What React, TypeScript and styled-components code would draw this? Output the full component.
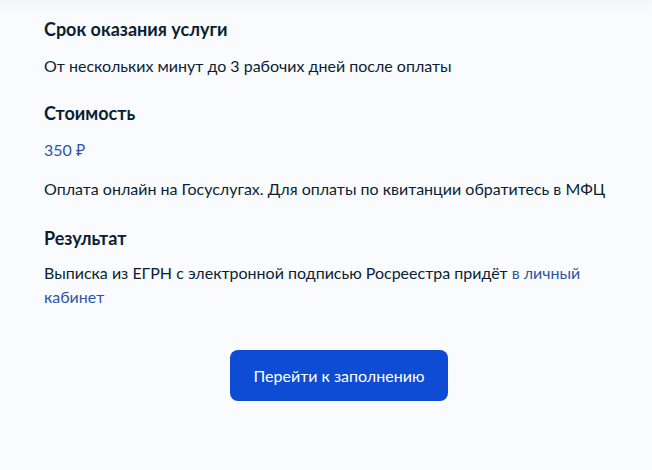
import React from 'react';
import styled, { createGlobalStyle } from 'styled-components';

const GlobalStyle = createGlobalStyle`
  html, body {
    margin: 0;
    padding: 0;
    background: #f9fbfe;
  }
  body {
    font-family: Lato, "Noto Sans", sans-serif;
    color: #0b1f33;
  }
`;

const Page = styled.div`
  width: 652px;
  height: 470px;
  box-sizing: border-box;
  padding: 17px 18px 0 44px;
  background: linear-gradient(#f4f6fa 0, #f9fbfe 14px);
`;

const Section = styled.section<{ gap?: number }>`
  margin-bottom: ${(p) => p.gap ?? 23}px;
`;

const Title = styled.h3<{ tight?: boolean }>`
  margin: 0 0 ${(p) => (p.tight ? 11 : 13)}px;
  font-size: 18px;
  line-height: 24px;
  font-weight: 700;
`;

const Text = styled.p<{ accent?: boolean; narrow?: boolean }>`
  margin: 0 0 15px;
  max-width: ${(p) => (p.narrow ? '540px' : 'none')};
  font-size: 16px;
  line-height: 24px;
  color: ${(p) => (p.accent ? '#2f55a4' : '#0b1f33')};
  &:last-child {
    margin-bottom: 0;
  }
`;

const Link = styled.a`
  color: #2f55a4;
  text-decoration: none;
`;

const Actions = styled.div`
  display: flex;
  justify-content: center;
  padding-top: 41px;
`;

const Button = styled.button`
  width: 218px;
  height: 51px;
  border: none;
  border-radius: 8px;
  background: #0d4cd3;
  color: #ffffff;
  font-family: Lato, "Noto Sans", sans-serif;
  font-size: 16px;
  cursor: pointer;
`;

export default function App() {
  return (
    <>
      <GlobalStyle />
      <Page>
        <Section>
          <Title>Срок оказания услуги</Title>
          <Text>От нескольких минут до 3 рабочих дней после оплаты</Text>
        </Section>
        <Section gap={25}>
          <Title>Стоимость</Title>
          <Text accent>350 ₽</Text>
          <Text>Оплата онлайн на Госуслугах. Для оплаты по квитанции обратитесь в МФЦ</Text>
        </Section>
        <Section gap={0}>
          <Title tight>Результат</Title>
          <Text narrow>
            Выписка из ЕГРН с электронной подписью Росреестра придёт <Link href="#">в личный кабинет</Link>
          </Text>
        </Section>
        <Actions>
          <Button>Перейти к заполнению</Button>
        </Actions>
      </Page>
    </>
  );
}
